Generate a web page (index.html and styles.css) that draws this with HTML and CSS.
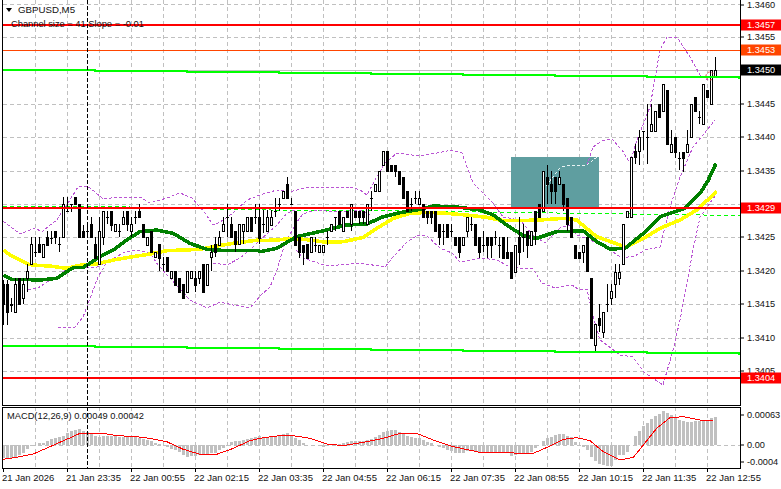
FILE: index.html
```html
<!DOCTYPE html>
<html lang="en">
<head>
<meta charset="utf-8">
<title>GBPUSD,M5</title>
<link rel="stylesheet" href="styles.css">
</head>
<body>
<main class="terminal">
  <section class="pane pane-main">
    <div class="plot">
      <svg id="main-chart" class="chart" viewBox="0 0 741 406" width="741" height="406" shape-rendering="crispEdges"></svg>
      <div class="legend">
        <div class="legend-symbol"><span class="legend-arrow"></span>GBPUSD,M5</div>
        <div class="legend-channel">Channel size = 41 Slope = -0.01</div>
      </div>
    </div>
    <div class="scale">
      <span class="tick" style="top:5px">1.3460</span>
      <span class="tick" style="top:37px">1.3455</span>
      <span class="tick" style="top:104px">1.3445</span>
      <span class="tick" style="top:137px">1.3440</span>
      <span class="tick" style="top:171px">1.3435</span>
      <span class="tick" style="top:237px">1.3425</span>
      <span class="tick" style="top:271px">1.3420</span>
      <span class="tick" style="top:304px">1.3415</span>
      <span class="tick" style="top:338px">1.3410</span>
      <span class="tick" style="top:371px">1.3405</span>
      <span class="tick tag tag-red" style="top:25px">1.3457</span>
      <span class="tick tag tag-orange" style="top:50px">1.3453</span>
      <span class="tick tag tag-black" style="top:70px">1.3450</span>
      <span class="tick tag tag-red" style="top:208px">1.3429</span>
      <span class="tick tag tag-red" style="top:378px">1.3404</span>
    </div>
  </section>
  <section class="pane pane-macd">
    <div class="plot">
      <svg id="macd-chart" class="chart" viewBox="0 407 741 62" width="741" height="62" shape-rendering="crispEdges"></svg>
      <div class="legend legend-macd">MACD(12,26,9) 0.00049 0.00042</div>
    </div>
    <div class="scale">
      <span class="tick" style="top:8px">0.00063</span>
      <span class="tick" style="top:38px">0.00</span>
      <span class="tick" style="top:55px">-0.0004</span>
    </div>
  </section>
  <div class="time-axis">
    <span class="time">21 Jan 2026</span>
    <span class="time">21 Jan 23:35</span>
    <span class="time">22 Jan 00:55</span>
    <span class="time">22 Jan 02:15</span>
    <span class="time">22 Jan 03:35</span>
    <span class="time">22 Jan 04:55</span>
    <span class="time">22 Jan 06:15</span>
    <span class="time">22 Jan 07:35</span>
    <span class="time">22 Jan 08:55</span>
    <span class="time">22 Jan 10:15</span>
    <span class="time">22 Jan 11:35</span>
    <span class="time">22 Jan 12:55</span>
  </div>
</main>
<script src="chart.js"></script>
</body>
</html>
```
FILE: styles.css
```css
* { box-sizing: border-box; }
html, body { margin: 0; padding: 0; background: #fff; }
body { width: 781px; height: 489px; overflow: hidden; font-family: "Liberation Sans", Arial, sans-serif; color: #111; }

.terminal { display: flex; flex-direction: column; width: 781px; height: 489px; }
.pane { display: flex; flex: none; }
.pane-main { height: 406px; }
.pane-macd { height: 62px; margin-top: 1px; }
.plot { position: relative; width: 741px; flex: none; }
.chart { display: block; overflow: hidden; }

.scale { position: relative; width: 40px; flex: none; font-size: 9.2px; }
.tick { position: absolute; left: 0; width: 40px; padding-left: 6px; line-height: 11px; height: 11px; transform: translateY(-50%); white-space: nowrap; }
.tick::before { content: ""; position: absolute; left: 0; top: 5px; width: 3px; height: 1px; background: #000; }
.tag { color: #fff; }
.tag::before { display: none; }
.tag-red { background: #f00; }
.tag-orange { background: #ff4500; }
.tag-black { background: #000; }

.legend { position: absolute; left: 0; top: 0; font-size: 9.3px; line-height: 12px; color: #111; white-space: nowrap; }
.legend-symbol { position: relative; padding: 4px 0 0 18px; font-size: 9.7px; }
.legend-arrow { position: absolute; left: 6px; top: 8px; border: 3.5px solid transparent; border-top: 4px solid #000; border-bottom: 0; }
.legend-channel { padding: 2px 0 0 11px; }
.legend-macd { left: 7px; top: 3px; }

.time-axis { display: flex; flex: none; padding: 3px 0 0 2px; font-size: 9.5px; line-height: 12px; }
.time { position: relative; width: 64px; flex: none; white-space: nowrap; }
.time::before { content: ""; position: absolute; left: 1px; top: -3px; width: 1px; height: 3px; background: #000; }
```
FILE: chart.js
```js
// Candles: [kind, bodyTop, bodyBottom, high, low]; kind 1 = bull (white), 0 = bear or doji (black).
var realCandles = [
[0,284,304,280,325],[0,284,312,280,325],[0,304,305,298,312],[1,284,312,278,312],[0,278,304,278,304],[1,284,298,278,304],
[1,271,278,264,292],[1,244,264,237,264],[0,252,252,237,257],[0,244,252,237,252],[1,244,257,244,257],[0,237,245,231,245],
[0,238,238,231,244],[0,231,237,231,244],[0,244,244,237,252],[1,204,237,197,237],[0,211,211,197,212],[0,204,204,204,212],
[0,197,204,197,204],[0,204,237,204,237],[0,231,237,225,237],[0,231,231,225,237],[0,224,237,217,237],[0,244,258,237,258],
[1,231,264,217,264],[1,211,237,211,245],[0,217,217,211,224],[0,211,225,211,231],[1,224,231,224,231],[0,231,231,224,237],
[1,217,224,211,224],[0,211,224,211,231],[1,224,231,217,237],[0,217,217,211,224],[0,211,217,204,217],[0,224,237,224,237],
[1,237,245,237,245],[0,231,252,231,252],[1,252,257,252,257],[0,244,258,244,271],[0,264,264,257,271],[0,257,271,257,271],
[1,271,278,271,278],[0,271,285,271,285],[0,278,292,278,292],[0,284,298,284,298],[1,271,292,271,292],[1,271,278,271,278],
[0,278,285,271,292],[1,271,278,271,284],[0,264,292,264,292],[1,264,285,264,285],[1,252,257,245,271],[0,244,252,237,257],
[1,237,245,231,245],[1,224,231,217,231],[0,217,217,204,237],[0,224,237,217,237],[0,231,244,231,252],[1,224,244,224,244],
[1,224,231,224,244],[1,217,231,217,231],[0,217,231,217,231],[0,217,217,204,224],[0,217,238,204,244]
];
var zoomCandles = [
[0,282,282,240,310],[1,262,304,240,304],[1,262,284,240,284],[0,243,243,203,262],[0,222,222,203,243],[1,183,203,183,203],
[0,162,203,142,203],[0,222,222,203,222],[0,243,345,243,345],[0,322,365,322,385],[0,345,365,345,404],[0,343,384,343,384],
[1,322,365,322,365],[0,345,345,322,365],[1,345,365,345,365],[1,345,365,345,365],[0,322,322,304,345],[1,283,304,283,304],
[0,262,262,262,304],[0,243,283,243,283],[1,262,304,262,304],[0,243,262,243,262],[1,222,283,222,304],[0,243,262,243,262],
[0,243,262,243,283],[0,243,262,243,283],[1,222,283,222,283],[0,203,203,183,243],[1,162,183,162,183],[1,124,183,124,183],
[1,64,104,64,104],[0,64,124,64,124],[0,104,124,104,124],[0,104,124,104,142],[0,124,162,124,162],[0,142,203,142,203],
[0,183,243,183,243],[0,222,222,203,243],[0,203,203,183,222],[1,203,222,183,222],[0,222,262,222,262],[0,243,262,243,283],
[0,243,262,243,283],[0,243,304,243,304],[0,283,322,283,345],[0,304,304,283,345],[0,283,322,283,322],[0,304,304,283,322],
[0,322,345,322,345],[0,322,365,322,384],[1,322,345,322,345],[1,262,304,262,322],[0,283,283,262,304],[0,283,345,283,345],
[0,322,365,322,384],[0,345,345,304,365],[0,322,345,322,384],[0,322,345,322,384],[0,322,322,304,345],[0,345,345,322,384],
[0,322,384,322,384],[0,365,384,322,384],[0,365,445,365,445],[1,345,425,345,425],[0,322,365,262,404],[0,322,322,283,365],
[0,304,345,304,384],[1,304,345,304,345],[0,243,304,243,345],[0,222,262,222,262],[1,124,243,124,243],[0,142,162,104,222],
[0,162,183,124,222],[0,142,183,142,222],[1,142,162,124,162],[0,162,222,162,243],[0,203,283,203,304],[0,262,322,262,322],
[0,345,385,345,385],[0,365,385,365,385],[1,345,365,345,398],[0,322,424,322,424]
];
var lastCandles = [
[0,278,338,278,338],[1,324,345,324,351],[0,318,325,304,332],[1,312,332,312,338],[0,304,304,284,312],[1,291,298,284,305],
[1,272,284,264,298],[1,272,278,264,285],[1,224,264,224,264],[1,211,217,211,217],[1,157,217,157,217],[0,151,157,144,164],
[1,137,151,130,165],[0,131,131,131,150],[0,137,137,104,164],[1,124,131,104,131],[1,111,131,111,131],[0,104,117,104,117],
[1,84,111,84,111],[0,90,144,90,144],[1,144,152,130,152],[0,137,152,137,158],[0,158,158,152,170],[0,152,158,152,172],
[1,144,152,130,152],[1,104,137,104,137],[0,97,111,97,111],[0,117,117,111,124],[1,84,124,84,124],[0,90,97,90,97],
[1,70,104,70,104],[1,70,77,57,77]
];
var candles = realCandles
  .concat(zoomCandles.map(function (c) {
    return [c[0], 130 + c[1] / 3, 130 + c[2] / 3, 130 + c[3] / 3, 130 + c[4] / 3];
  }))
  .concat(lastCandles);

// Polylines in reference pixels.
var bands = [
  [[3,221],[12,228],[20,234],[28,231],[35,228],[42,232],[50,225],[57,220],[63,210],[68,203],[78,187],[87,186],[95,192],[103,199],[120,197],[140,197],[150,203],[167,198],[180,193],[192,198],[205,213],[213,225],[220,222],[233,213],[247,200],[260,195],[277,190],[290,192],[307,187],[327,188],[350,187],[360,190],[367,195],[375,180],[385,163],[397,153],[420,156],[437,153],[452,150],[462,153],[473,183],[493,203],[503,217],[520,220],[533,235],[545,243],[560,228],[570,225],[577,235],[590,240],[610,250],[622,258],[635,256],[645,250],[660,247],[670,207],[680,177],[693,147],[707,130],[715,120]],
  [[28,290],[38,288],[47,282],[55,279],[68,268],[80,267],[95,268],[107,262],[125,252],[137,250],[150,253],[158,265],[190,300],[207,308],[220,302],[233,305],[250,308],[260,296],[270,287],[277,270],[285,243],[297,222],[303,214],[315,210],[337,212],[360,210],[370,215]],
  [[58,327],[75,327],[83,317],[87,307],[92,293],[98,277],[107,262]],
  [[213,263],[227,265],[240,258],[253,247],[260,240],[277,225],[287,213],[295,210]],
  [[296,250],[303,258],[327,266],[360,263],[385,267],[393,257],[407,242],[418,235],[427,236],[440,248],[452,253],[460,262],[480,258],[497,260],[510,267],[520,268],[533,269],[542,283],[555,288],[572,285],[578,289],[587,289],[592,313],[600,340],[620,355],[633,357],[645,373],[663,385],[673,350],[680,320],[687,283],[693,250],[700,217],[715,196]],
  [[543,190],[560,168],[567,165],[587,165],[593,147],[602,141],[612,139],[622,150],[630,163],[637,140],[650,107],[660,50],[667,37],[677,37],[690,57],[700,75],[708,80]]
];
function fromZoom(ox, oy, pts) {
  return pts.map(function (p) { return [ox + p[0] / 3, oy + p[1] / 3]; });
}
var yellow = fromZoom(0,160,[[10,270],[30,285],[60,300],[85,313],[110,316],[150,318],[200,325],[240,316],[290,312],[340,300],[400,290],[450,282],[500,272],[550,270],[600,268],[650,258],[700,250],[775,240]])
  .concat(fromZoom(260,130,[[0,332],[50,330],[100,325],[150,330],[200,337],[250,335],[310,322],[350,295],[400,265],[450,250],[500,247],[560,250],[620,255],[680,262],[730,272]]))
  .concat(fromZoom(500,130,[[50,272],[120,270],[190,265],[230,270],[290,320],[360,345],[380,350],[430,325],[480,295],[540,270],[590,240],[650,185]]));
var green = fromZoom(0,160,[[10,345],[35,358],[60,358],[120,360],[170,355],[200,335],[220,323],[250,322],[300,290],[340,270],[380,240],[420,215],[470,210],[520,220],[570,250],[620,268],[680,272],[775,272]])
  .concat(fromZoom(260,130,[[0,365],[50,355],[110,320],[200,300],[260,285],[320,282],[370,260],[420,248],[470,240],[520,228],[600,232],[660,240],[700,255],[740,285]]))
  .concat(fromZoom(500,130,[[70,317],[110,325],[170,305],[250,303],[290,335],[330,357],[375,355],[430,310],[480,260],[555,235],[600,190],[625,150],[648,100]]));

// MACD histogram tops, in zoomed pixels of the y = 370 crop, one per candle.
var hist = [265,265,265,262,255,248,238,228,226,220,220,213,207,204,202,197,190,183,180,178,182,187,190,197,200,198,197,197,197,200,200,200,202,202,205,207,210,213,218,222,225,232,238,240,245,255,260,258,258,255,255,252,250,248,240,235,228,215,212,213,210,207,203,200,198,
202,200,198,198,195,192,190,195,205,210,220,224,226,226,228,232,228,224,226,222,218,215,212,212,212,212,210,207,202,195,187,182,180,180,185,192,197,202,204,205,210,215,220,224,230,235,240,242,248,250,250,243,243,245,248,248,248,248,248,248,248,250,258,255,250,
248,248,245,235,226,213,205,200,196,192,192,198,200,215,226,232,240,262,272,282,285,288,288,270,255,255,245,225,198,182,168,158,148,138,132,123,128,135,140,150,152,157,155,152,152,150,150,145,141];
var signal = fromZoom(0,370,[[10,268],[50,262],[100,252],[150,230],[200,208],[240,190],[310,190],[350,197],[410,200],[450,205],[500,215],[550,238],[600,253],[650,253],[700,235],[750,212]])
  .concat(fromZoom(260,370,[[0,205],[50,198],[100,197],[150,205],[200,222],[250,227],[310,217],[370,205],[420,190],[470,190],[520,210],[580,230],[660,247],[740,248]]))
  .concat(fromZoom(520,370,[[0,250],[40,250],[90,228],[130,208],[170,203],[210,212],[250,245],[300,270],[340,262],[370,225],[410,175],[450,143],[490,140],[540,150],[580,153]]));

var SVG_NS = "http://www.w3.org/2000/svg";
function add(svg, name, attrs) {
  var el = document.createElementNS(SVG_NS, name);
  Object.keys(attrs).forEach(function (k) { el.setAttribute(k, attrs[k]); });
  svg.appendChild(el);
  return el;
}
function rect(svg, x, y, w, h, fill) { return add(svg, "rect", { x: x, y: y, width: w, height: h, fill: fill }); }
function line(svg, x1, y1, x2, y2, stroke, dash) {
  return add(svg, "line", { x1: x1, y1: y1, x2: x2, y2: y2, stroke: stroke, "stroke-width": 1, "stroke-dasharray": dash || "none" });
}
function poly(svg, pts, stroke, width, dash, smooth) {
  return add(svg, "polyline", {
    points: pts.map(function (p) { return p.join(","); }).join(" "),
    fill: "none", stroke: stroke, "stroke-width": width, "stroke-dasharray": dash || "none",
    "stroke-linejoin": "round", "stroke-linecap": "butt", "shape-rendering": smooth ? "auto" : "crispEdges"
  });
}
function steps(svg, y0) {
  var pts = [], x = 3, y = y0;
  while (x < 741) {
    var nx = Math.min(x + 92, 741);
    pts.push([x, y], [nx, y]);
    x = nx; y += 1;
  }
  poly(svg, pts, "#00ff00", 2);
}
function frame(svg, top, bottom) {
  rect(svg, 2, top, 1, bottom - top, "#000");
  rect(svg, 740, top, 1, bottom - top, "#000");
}
function verticalGrid(svg, top, bottom) {
  for (var k = 0; k < 22; k++) {
    var x = 35.5 + 32 * k;
    if (x < 740) line(svg, x, top, x, bottom, "#c0c0c0", "4 3");
  }
}

var main = document.getElementById("main-chart");
verticalGrid(main, 0, 405);
[4.5, 37.5, 70.5, 104.5, 137.5, 171.5, 204.5, 237.5, 271.5, 304.5, 338.5, 371.5].forEach(function (y) {
  line(main, 3, y, 740, y, "#c0c0c0", "4 3");
});
rect(main, 511, 157, 88, 50, "#5f9ea0");
rect(main, 187, 70, 553, 1, "#c0c0c0");
poly(main, [[3,206.5],[130,207],[210,209],[300,210.5],[400,211],[520,212.5],[740,215.5]], "#00ff00", 1, "4 3");
bands.forEach(function (b) { poly(main, b, "#ba55d3", 1, "3 2"); });
poly(main, [[543,190],[560,168],[567,165],[587,165],[597,157]], "#e8f4f4", 1, "3 2");
poly(main, yellow, "#ffff00", 3.6);
poly(main, green, "#008000", 3.6);
candles.forEach(function (c, i) {
  var x = 3 + 4 * i, top = Math.round(c[1]), bot = Math.round(c[2]);
  rect(main, x, Math.round(c[3]), 1, Math.max(Math.round(c[4]) - Math.round(c[3]), 1), "#000");
  if (c[0] === 1) {
    rect(main, x - 1, top, 3, bot - top + 1, "#000");
    rect(main, x, top + 1, 1, Math.max(bot - top - 1, 0), "#fff");
  } else if (bot <= top) {
    rect(main, x - 1, top, 3, 1, "#000");
  } else {
    rect(main, x - 1, top, 3, bot - top + 1, "#000");
  }
});
add(main, "circle", { cx: 710, cy: 76, r: 4, fill: "none", stroke: "#e04040", "stroke-width": 1, "stroke-dasharray": "2 2", "shape-rendering": "auto" });
steps(main, 70);
steps(main, 346);
rect(main, 3, 24, 738, 2, "#ff0000");
rect(main, 3, 50, 738, 1, "#ff4500");
rect(main, 3, 207, 738, 2, "#ff0000");
rect(main, 3, 377, 738, 2, "#ff0000");
line(main, 87.5, 0, 87.5, 405, "#000", "4 2");
frame(main, 0, 406);
rect(main, 2, 405, 739, 1, "#000");

var macd = document.getElementById("macd-chart");
verticalGrid(macd, 407, 468);
line(macd, 3, 445.5, 740, 445.5, "#c0c0c0", "4 3");
hist.forEach(function (z, i) {
  var y = Math.round(370 + z / 3), x = 2 + 4 * i;
  if (y < 445) rect(macd, x, y, 3, 445 - y, "#c0c0c0");
  else if (y > 445) rect(macd, x, 445, 3, y - 445, "#c0c0c0");
});
poly(macd, signal, "#ff0000", 1);
line(macd, 87.5, 407, 87.5, 468, "#000", "4 2");
rect(macd, 2, 407, 739, 1, "#000");
rect(macd, 2, 468, 739, 1, "#000");
frame(macd, 407, 469);
```
